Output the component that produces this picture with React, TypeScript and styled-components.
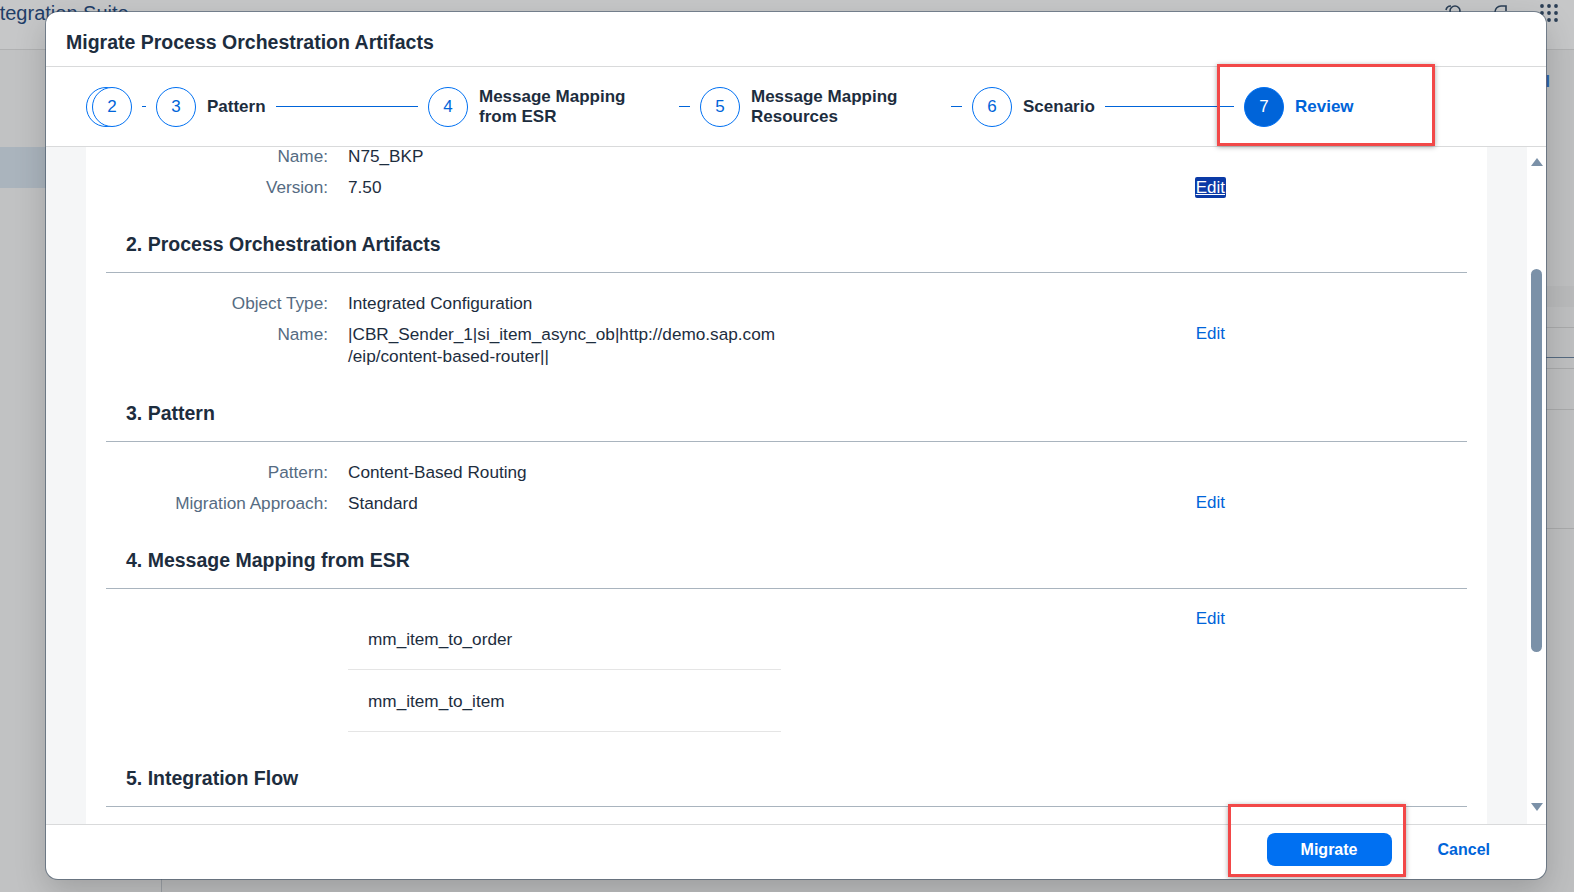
import React, { useLayoutEffect, useRef } from 'react';
import styled, { createGlobalStyle } from 'styled-components';

const GlobalStyle = createGlobalStyle`
  html, body { margin: 0; padding: 0; }
  body {
    font-family: "Liberation Sans", Arial, sans-serif;
    background: #bebfc0;
    overflow: hidden;
  }
  * { box-sizing: border-box; }
`;

/* ---------- background shell (behind the modal) ---------- */

const Page = styled.div`
  position: relative;
  width: 1574px;
  height: 892px;
  overflow: hidden;
  display: flex;
  flex-direction: column;
  background: #bebfc0;
`;

const ShellBar = styled.header`
  height: 50px;
  flex-shrink: 0;
  display: flex;
  align-items: flex-start;
  justify-content: space-between;
  background: #c6c7c8;
  border-bottom: 1px solid #b0b1b2;
`;

const ShellTitle = styled.span`
  margin-left: -17px;
  font-size: 20px;
  line-height: 26px;
  color: #1f3e68;
  white-space: nowrap;
`;

const ShellActions = styled.div`
  display: flex;
  align-items: center;
  gap: 28px;
  padding: 3px 15px 0 0;
  color: #2b3f56;
`;

const ShellBody = styled.div`
  flex: 1;
  display: flex;
  min-height: 0;
`;

const SideNav = styled.nav`
  width: 162px;
  flex-shrink: 0;
  padding-top: 97px;
  background: #c1c2c3;
  border-right: 1px solid #9da2a8;
`;

const NavItem = styled.div<{ $active?: boolean }>`
  height: 41px;
  background: ${(p) => (p.$active ? '#aab4bd' : 'transparent')};
`;

const Main = styled.main`
  flex: 1;
  display: flex;
  flex-direction: column;
`;

const MainToolbar = styled.div`
  height: 64px;
  display: flex;
  align-items: center;
  justify-content: flex-end;
  padding-right: 24px;
`;

const ToolbarLink = styled.span`
  color: #2e62ad;
  font-size: 16px;
  font-weight: 700;
`;

const BgRow = styled.div<{ $h: number; $line?: string; $bg?: string }>`
  height: ${(p) => p.$h}px;
  background: ${(p) => p.$bg || 'transparent'};
  border-bottom: 1px solid ${(p) => p.$line || 'transparent'};
`;

/* ---------- dialog ---------- */

const Dialog = styled.section`
  position: absolute;
  top: 12px;
  left: 46px;
  width: 1500px;
  height: 867px;
  display: flex;
  flex-direction: column;
  background: #fff;
  border-radius: 12px;
  overflow: hidden;
  box-shadow: 0 0 0 1px rgba(52, 72, 94, 0.55), 0 12px 32px rgba(0, 0, 0, 0.18);
`;

const DialogHeader = styled.header`
  flex-shrink: 0;
  height: 55px;
  padding: 18px 20px 0;
  border-bottom: 1px solid #d9dadb;
`;

const DialogTitle = styled.h1`
  margin: 0;
  font-size: 19.5px;
  line-height: 24px;
  font-weight: 700;
  color: #1d2d3e;
`;

const Stepper = styled.nav`
  flex-shrink: 0;
  height: 80px;
  display: flex;
  align-items: center;
  padding-left: 40px;
  border-bottom: 1px solid #d9dadb;
  overflow: hidden;
`;

const Step = styled.div<{ $width: number }>`
  flex: 0 0 ${(p) => p.$width}px;
  min-width: 0;
  display: flex;
  align-items: center;
`;

const StepCircle = styled.span<{ $active?: boolean }>`
  flex: 0 0 40px;
  height: 40px;
  border-radius: 50%;
  border: 1px solid #0070f2;
  background: ${(p) => (p.$active ? '#0064d9' : '#fff')};
  color: ${(p) => (p.$active ? '#fff' : '#0064d9')};
  display: flex;
  align-items: center;
  justify-content: center;
  font-size: 17px;
`;

const StepLabel = styled.span<{ $active?: boolean; $wide?: boolean }>`
  flex-shrink: 0;
  margin-left: 11px;
  width: ${(p) => (p.$wide ? '190px' : 'auto')};
  font-size: 17px;
  line-height: 20px;
  font-weight: 700;
  color: ${(p) => (p.$active ? '#0064d9' : '#1d2d3e')};
`;

const Connector = styled.span`
  flex: 1 1 auto;
  min-width: 0;
  height: 1px;
  margin: 0 10px;
  background: #0064d9;
`;

const ContentArea = styled.div`
  flex: 1;
  min-height: 0;
  display: flex;
  background: #f5f6f7;
`;

const Scroller = styled.div`
  flex: 1;
  min-width: 0;
  overflow: hidden;
  padding: 0 40px;
`;

const Panel = styled.div`
  background: #fff;
  padding: 0 20px 90px;
`;

const Section = styled.section`
  padding-top: 30px;
`;

const SectionTitle = styled.h2`
  margin: 0;
  padding: 0 0 16px 20px;
  font-size: 19.5px;
  line-height: 24px;
  font-weight: 700;
  color: #1d2d3e;
  border-bottom: 1px solid #a9b4be;
`;

const Form = styled.div`
  padding-top: 14px;
`;

const FieldRow = styled.div`
  display: grid;
  grid-template-columns: 222px 433px 1fr auto;
  column-gap: 20px;
  align-items: start;
  padding: 5px 241px 4px 0;
  font-size: 17.2px;
  line-height: 22px;
`;

const FieldLabel = styled.span`
  text-align: right;
  color: #556b82;
`;

const FieldValue = styled.span`
  color: #1d2d3e;
  white-space: nowrap;
`;

const EditLink = styled.a<{ $focused?: boolean }>`
  display: inline-block;
  grid-column: 4;
  font-size: 17px;
  line-height: ${(p) => (p.$focused ? '21px' : '22px')};
  margin-top: ${(p) => (p.$focused ? '1px' : '0')};
  padding: 0 1px;
  border-radius: 2px;
  cursor: pointer;
  color: ${(p) => (p.$focused ? '#ffffff' : '#0064d9')};
  background: ${(p) => (p.$focused ? '#0b3aa6' : 'transparent')};
  text-decoration: ${(p) => (p.$focused ? 'underline' : 'none')};
`;

const MappingList = styled.ul`
  margin: 0;
  padding: 0;
  list-style: none;
`;

const MappingItem = styled.li`
  height: 62px;
  display: flex;
  align-items: center;
  padding-left: 20px;
  border-bottom: 1px solid #e5e5e5;
  color: #1d2d3e;
`;

const ScrollRail = styled.div`
  flex: 0 0 19px;
  display: flex;
  flex-direction: column;
  align-items: center;
  padding: 11px 0 13px;
  background: #fff;
`;

const RailArrow = styled.span<{ $dir: 'up' | 'down' }>`
  width: 0;
  height: 0;
  border-left: 6px solid transparent;
  border-right: 6px solid transparent;
  ${(p) =>
    p.$dir === 'up'
      ? 'border-bottom: 8px solid #7b91a8;'
      : 'border-top: 8px solid #7b91a8;'}
`;

const RailTrack = styled.div`
  flex: 1;
  width: 11px;
`;

const RailThumb = styled.div`
  margin-top: 103px;
  height: 383px;
  border-radius: 6px;
  background: #7b91a8;
`;

const DialogFooter = styled.footer`
  flex: 0 0 55px;
  display: flex;
  align-items: center;
  justify-content: flex-end;
  gap: 31px;
  padding: 0 41px 5px 0;
  border-top: 1px solid #d9dadb;
`;

const PrimaryButton = styled.button`
  width: 125px;
  height: 33px;
  border: none;
  border-radius: 8px;
  background: #0070f2;
  color: #fff;
  font-family: inherit;
  font-size: 16px;
  font-weight: 700;
  cursor: pointer;
`;

const GhostButton = styled.button`
  height: 33px;
  padding: 0 15px;
  border: none;
  background: transparent;
  color: #0064d9;
  font-family: inherit;
  font-size: 16px;
  font-weight: 700;
  cursor: pointer;
`;

const Callout = styled.div<{ $x: number; $y: number; $w: number; $h: number }>`
  position: absolute;
  left: ${(p) => p.$x}px;
  top: ${(p) => p.$y}px;
  width: ${(p) => p.$w}px;
  height: ${(p) => p.$h}px;
  border: 3px solid #f24848;
  box-shadow: 0 1px 5px rgba(0, 0, 0, 0.35);
  pointer-events: none;
`;

/* ---------- icons ---------- */

const IconSvg = styled.svg`
  display: block;
`;

const HelpIcon = () => (
  <IconSvg width="20" height="20" viewBox="0 0 20 20" fill="none" stroke="currentColor" strokeWidth="1.6">
    <path d="M3 7a5 5 0 0 1 5-4" />
    <circle cx="12" cy="8" r="5" />
  </IconSvg>
);

const NotifyIcon = () => (
  <IconSvg width="20" height="20" viewBox="0 0 20 20" fill="none" stroke="currentColor" strokeWidth="1.6">
    <path d="M4 9a6 6 0 0 1 6-6h5v5" />
  </IconSvg>
);

const GridIcon = () => (
  <IconSvg width="20" height="20" viewBox="0 0 20 20" fill="currentColor">
    {[3, 10, 17].map((y) =>
      [3, 10, 17].map((x) => <circle key={`${x}-${y}`} cx={x} cy={y} r="1.9" />)
    )}
  </IconSvg>
);

/* ---------- data ---------- */

type Field = { label: string; value: React.ReactNode };

export default function App() {
  const scrollRef = useRef<HTMLDivElement>(null);

  useLayoutEffect(() => {
    if (scrollRef.current) scrollRef.current.scrollTop = 92;
  }, []);

  const renderRows = (fields: Field[], focusedEdit = false) =>
    fields.map((f, i) => (
      <FieldRow key={f.label}>
        <FieldLabel>{f.label}</FieldLabel>
        <FieldValue>{f.value}</FieldValue>
        {i === fields.length - 1 && (
          <EditLink $focused={focusedEdit}>Edit</EditLink>
        )}
      </FieldRow>
    ));

  return (
    <>
      <GlobalStyle />
      <Page>
        <ShellBar>
          <ShellTitle>Integration Suite</ShellTitle>
          <ShellActions>
            <HelpIcon />
            <NotifyIcon />
            <GridIcon />
          </ShellActions>
        </ShellBar>
        <ShellBody>
          <SideNav>
            <NavItem $active />
          </SideNav>
          <Main>
            <MainToolbar>
              <ToolbarLink>Detail</ToolbarLink>
            </MainToolbar>
            <BgRow $h={172} />
            <BgRow $h={21} $bg="#b9babb" />
            <BgRow $h={21} $line="#a9aaab" />
            <BgRow $h={30} $line="#556a80" />
            <BgRow $h={11} $line="#a9aaab" />
            <BgRow $h={41} $line="#a9aaab" />
            <BgRow $h={119} $line="#a9aaab" />
          </Main>
        </ShellBody>

        <Dialog role="dialog" aria-label="Migrate Process Orchestration Artifacts">
          <DialogHeader>
            <DialogTitle>Migrate Process Orchestration Artifacts</DialogTitle>
          </DialogHeader>

          <Stepper>
            <Step $width={6}>
              <StepCircle>1</StepCircle>
            </Step>
            <Step $width={64}>
              <StepCircle>2</StepCircle>
              <Connector />
            </Step>
            <Step $width={272}>
              <StepCircle>3</StepCircle>
              <StepLabel>Pattern</StepLabel>
              <Connector />
            </Step>
            <Step $width={272}>
              <StepCircle>4</StepCircle>
              <StepLabel $wide>
                Message Mapping
                <br />
                from ESR
              </StepLabel>
              <Connector />
            </Step>
            <Step $width={272}>
              <StepCircle>5</StepCircle>
              <StepLabel $wide>
                Message Mapping
                <br />
                Resources
              </StepLabel>
              <Connector />
            </Step>
            <Step $width={272}>
              <StepCircle>6</StepCircle>
              <StepLabel>Scenario</StepLabel>
              <Connector />
            </Step>
            <Step $width={200}>
              <StepCircle $active>7</StepCircle>
              <StepLabel $active>Review</StepLabel>
            </Step>
          </Stepper>

          <ContentArea>
            <Scroller ref={scrollRef}>
              <Panel>
                <Section>
                  <SectionTitle>1. System</SectionTitle>
                  <Form>
                    {renderRows(
                      [
                        { label: 'Name:', value: 'N75_BKP' },
                        { label: 'Version:', value: '7.50' },
                      ],
                      true
                    )}
                  </Form>
                </Section>

                <Section>
                  <SectionTitle>2. Process Orchestration Artifacts</SectionTitle>
                  <Form>
                    {renderRows([
                      { label: 'Object Type:', value: 'Integrated Configuration' },
                      {
                        label: 'Name:',
                        value: (
                          <>
                            |CBR_Sender_1|si_item_async_ob|http://demo.sap.com
                            <br />
                            /eip/content-based-router||
                          </>
                        ),
                      },
                    ])}
                  </Form>
                </Section>

                <Section>
                  <SectionTitle>3. Pattern</SectionTitle>
                  <Form>
                    {renderRows([
                      { label: 'Pattern:', value: 'Content-Based Routing' },
                      { label: 'Migration Approach:', value: 'Standard' },
                    ])}
                  </Form>
                </Section>

                <Section>
                  <SectionTitle>4. Message Mapping from ESR</SectionTitle>
                  <Form>
                    <FieldRow>
                      <FieldLabel />
                      <MappingList>
                        <MappingItem>mm_item_to_order</MappingItem>
                        <MappingItem>mm_item_to_item</MappingItem>
                      </MappingList>
                      <EditLink>Edit</EditLink>
                    </FieldRow>
                  </Form>
                </Section>

                <Section>
                  <SectionTitle>5. Integration Flow</SectionTitle>
                </Section>
              </Panel>
            </Scroller>
            <ScrollRail>
              <RailArrow $dir="up" />
              <RailTrack>
                <RailThumb />
              </RailTrack>
              <RailArrow $dir="down" />
            </ScrollRail>
          </ContentArea>

          <DialogFooter>
            <PrimaryButton>Migrate</PrimaryButton>
            <GhostButton>Cancel</GhostButton>
          </DialogFooter>

          <Callout $x={1171} $y={52} $w={218} $h={82} />
          <Callout $x={1182} $y={792} $w={178} $h={73} />
        </Dialog>
      </Page>
    </>
  );
}
